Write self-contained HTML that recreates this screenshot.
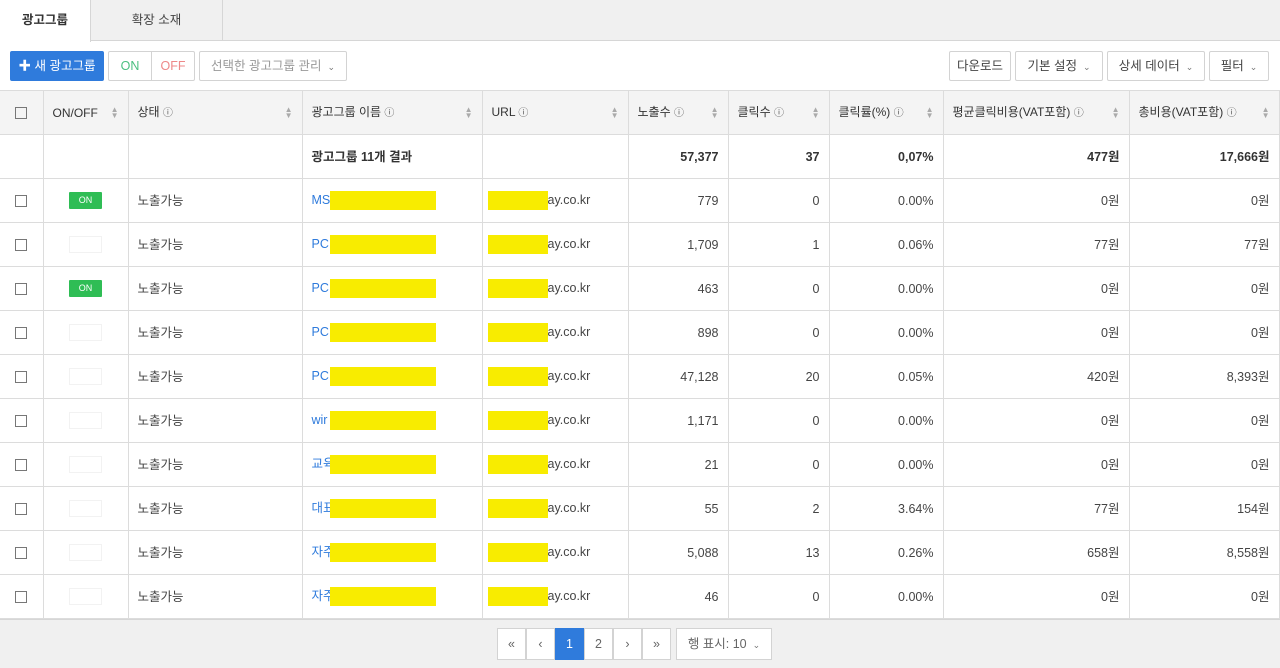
<!DOCTYPE html>
<html><head><meta charset="utf-8"><style>
*{box-sizing:border-box;margin:0;padding:0}
body{width:1280px;height:668px;overflow:hidden;background:#fff;font-family:"Liberation Sans","Noto Sans CJK KR",sans-serif;font-size:12.5px;color:#444;position:relative}
.tabs{position:absolute;left:0;top:0;width:1280px;height:41px;background:#f0f0f0;border-bottom:1px solid #d6d6d6}
.tab{position:absolute;top:0;height:41px;line-height:40px;text-align:center;font-size:12.5px}
.t1{left:0;width:91px;background:#fff;border-right:1px solid #d6d6d6;height:42px;font-weight:bold;color:#333}
.t2{left:91px;width:132px;border-right:1px solid #d6d6d6;color:#444}
.btn{position:absolute;top:51px;height:30px;line-height:28px;border:1px solid #d3d3d3;border-radius:2px;background:#fff;color:#444;font-size:12.5px;text-align:center}
.blue{background:#2f7bdc;border-color:#2f7bdc;color:#fff}
.chev{font-size:9px;color:#777;margin-left:6px}
table{position:absolute;top:90px;left:0;border-collapse:collapse;table-layout:fixed;width:1279px}
td,th{border:1px solid #dcdcdc;height:44px;padding:0 9px;white-space:nowrap;overflow:hidden;line-height:16px;vertical-align:middle}
th{background:#f4f4f4;font-weight:normal;text-align:left;color:#333;position:relative;font-size:12px}
th .s{position:absolute;right:9px;top:16px;color:#aaa;font-size:8px;line-height:6px}
tr td:first-child,tr th:first-child{border-left:none;text-align:center;padding:0}
.cb{display:inline-block;width:12px;height:12px;border:1px solid #777;vertical-align:middle}
.r{text-align:right}
.b td{font-weight:bold;color:#333}
.on{display:inline-block;width:33px;height:17px;background:#2fbd55;color:#fff;font-size:9px;line-height:17px;border-radius:1px;text-align:center;vertical-align:middle}
.off{display:inline-block;width:33px;height:17px;border:1px solid #f2f2f2;vertical-align:middle}
.lk{color:#2f7bdc;position:relative}
.w{position:relative;height:19px;line-height:19px}
.y{position:absolute;background:#f8ec00;height:19px;top:0}
.foot{position:absolute;top:619px;left:0;width:1280px;height:49px;background:#f0f0f0;border-top:1px solid #d6d6d6}
.pg{position:absolute;top:628px;height:32px;width:29px;border:1px solid #d3d3d3;background:#fff;line-height:30px;text-align:center;color:#666;font-size:12.5px}
.q{font-size:10px;color:#555}
</style></head><body>
<div class="tabs"><div class="tab t1">광고그룹</div><div class="tab t2">확장 소재</div></div>
<div class="btn blue" style="left:10px;width:94px">✚ 새 광고그룹</div>
<div class="btn" style="left:108px;width:44px;color:#4bbf80;border-radius:2px 0 0 2px">ON</div>
<div class="btn" style="left:151px;width:44px;color:#e88;border-radius:0 2px 2px 0">OFF</div>
<div class="btn" style="left:199px;width:148px;color:#999">선택한 광고그룹 관리<span class="chev">⌄</span></div>
<div class="btn" style="left:949px;width:62px">다운로드</div>
<div class="btn" style="left:1015px;width:88px">기본 설정<span class="chev">⌄</span></div>
<div class="btn" style="left:1107px;width:98px">상세 데이터<span class="chev">⌄</span></div>
<div class="btn" style="left:1209px;width:60px">필터<span class="chev">⌄</span></div>
<table>
<colgroup><col style="width:43px"><col style="width:85px"><col style="width:174px"><col style="width:180px"><col style="width:146px"><col style="width:100px"><col style="width:101px"><col style="width:114px"><col style="width:186px"><col style="width:150px"></colgroup>
<tr><th><span class="cb"></span></th><th>ON/OFF<span class="s">▲<br>▼</span></th><th>상태 <span class="q">ⓘ</span><span class="s">▲<br>▼</span></th><th>광고그룹 이름 <span class="q">ⓘ</span><span class="s">▲<br>▼</span></th><th>URL <span class="q">ⓘ</span><span class="s">▲<br>▼</span></th><th>노출수 <span class="q">ⓘ</span><span class="s">▲<br>▼</span></th><th>클릭수 <span class="q">ⓘ</span><span class="s">▲<br>▼</span></th><th>클릭률(%) <span class="q">ⓘ</span><span class="s">▲<br>▼</span></th><th>평균클릭비용(VAT포함) <span class="q">ⓘ</span><span class="s">▲<br>▼</span></th><th>총비용(VAT포함) <span class="q">ⓘ</span><span class="s">▲<br>▼</span></th></tr>
<tr class="b"><td></td><td></td><td></td><td>광고그룹 11개 결과</td><td></td><td class="r">57,377</td><td class="r">37</td><td class="r">0,07%</td><td class="r">477원</td><td class="r">17,666원</td></tr>
<tr><td><span class="cb"></span></td><td style="text-align:center"><span class="on">ON</span></td><td>노출가능</td><td class="lk"><div class="w">MS<span class="y" style="left:18px;width:106px"></span></div></td><td style="padding-left:5px"><div class="w"><span class="y" style="left:0;width:60px"></span><span style="margin-left:60px">ay.co.kr</span></div></td><td class="r">779</td><td class="r">0</td><td class="r">0.00%</td><td class="r">0원</td><td class="r">0원</td></tr>
<tr><td><span class="cb"></span></td><td style="text-align:center"><span class="off"></span></td><td>노출가능</td><td class="lk"><div class="w">PC<span class="y" style="left:18px;width:106px"></span></div></td><td style="padding-left:5px"><div class="w"><span class="y" style="left:0;width:60px"></span><span style="margin-left:60px">ay.co.kr</span></div></td><td class="r">1,709</td><td class="r">1</td><td class="r">0.06%</td><td class="r">77원</td><td class="r">77원</td></tr>
<tr><td><span class="cb"></span></td><td style="text-align:center"><span class="on">ON</span></td><td>노출가능</td><td class="lk"><div class="w">PC<span class="y" style="left:18px;width:106px"></span></div></td><td style="padding-left:5px"><div class="w"><span class="y" style="left:0;width:60px"></span><span style="margin-left:60px">ay.co.kr</span></div></td><td class="r">463</td><td class="r">0</td><td class="r">0.00%</td><td class="r">0원</td><td class="r">0원</td></tr>
<tr><td><span class="cb"></span></td><td style="text-align:center"><span class="off"></span></td><td>노출가능</td><td class="lk"><div class="w">PC<span class="y" style="left:18px;width:106px"></span></div></td><td style="padding-left:5px"><div class="w"><span class="y" style="left:0;width:60px"></span><span style="margin-left:60px">ay.co.kr</span></div></td><td class="r">898</td><td class="r">0</td><td class="r">0.00%</td><td class="r">0원</td><td class="r">0원</td></tr>
<tr><td><span class="cb"></span></td><td style="text-align:center"><span class="off"></span></td><td>노출가능</td><td class="lk"><div class="w">PC<span class="y" style="left:18px;width:106px"></span></div></td><td style="padding-left:5px"><div class="w"><span class="y" style="left:0;width:60px"></span><span style="margin-left:60px">ay.co.kr</span></div></td><td class="r">47,128</td><td class="r">20</td><td class="r">0.05%</td><td class="r">420원</td><td class="r">8,393원</td></tr>
<tr><td><span class="cb"></span></td><td style="text-align:center"><span class="off"></span></td><td>노출가능</td><td class="lk"><div class="w">wir<span class="y" style="left:18px;width:106px"></span></div></td><td style="padding-left:5px"><div class="w"><span class="y" style="left:0;width:60px"></span><span style="margin-left:60px">ay.co.kr</span></div></td><td class="r">1,171</td><td class="r">0</td><td class="r">0.00%</td><td class="r">0원</td><td class="r">0원</td></tr>
<tr><td><span class="cb"></span></td><td style="text-align:center"><span class="off"></span></td><td>노출가능</td><td class="lk"><div class="w">교육<span class="y" style="left:18px;width:106px"></span></div></td><td style="padding-left:5px"><div class="w"><span class="y" style="left:0;width:60px"></span><span style="margin-left:60px">ay.co.kr</span></div></td><td class="r">21</td><td class="r">0</td><td class="r">0.00%</td><td class="r">0원</td><td class="r">0원</td></tr>
<tr><td><span class="cb"></span></td><td style="text-align:center"><span class="off"></span></td><td>노출가능</td><td class="lk"><div class="w">대표<span class="y" style="left:18px;width:106px"></span></div></td><td style="padding-left:5px"><div class="w"><span class="y" style="left:0;width:60px"></span><span style="margin-left:60px">ay.co.kr</span></div></td><td class="r">55</td><td class="r">2</td><td class="r">3.64%</td><td class="r">77원</td><td class="r">154원</td></tr>
<tr><td><span class="cb"></span></td><td style="text-align:center"><span class="off"></span></td><td>노출가능</td><td class="lk"><div class="w">자주<span class="y" style="left:18px;width:106px"></span></div></td><td style="padding-left:5px"><div class="w"><span class="y" style="left:0;width:60px"></span><span style="margin-left:60px">ay.co.kr</span></div></td><td class="r">5,088</td><td class="r">13</td><td class="r">0.26%</td><td class="r">658원</td><td class="r">8,558원</td></tr>
<tr><td><span class="cb"></span></td><td style="text-align:center"><span class="off"></span></td><td>노출가능</td><td class="lk"><div class="w">자주<span class="y" style="left:18px;width:106px"></span></div></td><td style="padding-left:5px"><div class="w"><span class="y" style="left:0;width:60px"></span><span style="margin-left:60px">ay.co.kr</span></div></td><td class="r">46</td><td class="r">0</td><td class="r">0.00%</td><td class="r">0원</td><td class="r">0원</td></tr>
</table>
<div class="foot"></div>
<div class="pg" style="left:497px">«</div>
<div class="pg" style="left:526px">‹</div>
<div class="pg" style="left:555px;background:#2f7bdc;border-color:#2f7bdc;color:#fff">1</div>
<div class="pg" style="left:584px">2</div>
<div class="pg" style="left:613px">›</div>
<div class="pg" style="left:642px">»</div>
<div class="pg" style="left:676px;width:96px">행 표시: 10<span class="chev">⌄</span></div>
</body></html>
